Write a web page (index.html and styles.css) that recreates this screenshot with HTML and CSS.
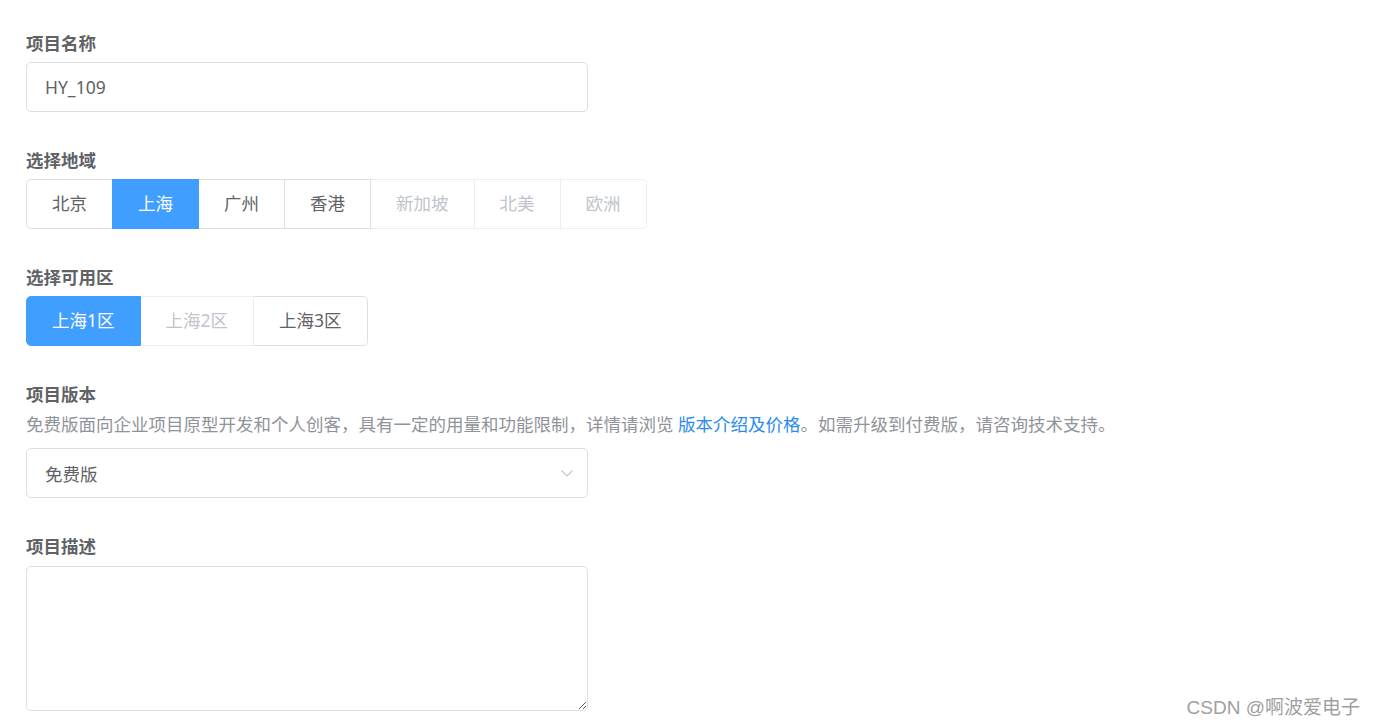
FILE: index.html
```html
<!DOCTYPE html>
<html lang="zh-CN">
<head>
  <meta charset="UTF-8" />
  <title>新建项目</title>
  <link rel="stylesheet" href="styles.css">
</head>
<body>
  <form class="project-form">
    <div class="form-item">
      <label class="form-label">项目名称</label>
      <input type="text" class="text-input" value="HY_109" />
    </div>

    <div class="form-item">
      <label class="form-label">选择地域</label>
      <div class="radio-group">
        <button type="button" class="radio-btn">北京</button>
        <button type="button" class="radio-btn is-active">上海</button>
        <button type="button" class="radio-btn">广州</button>
        <button type="button" class="radio-btn">香港</button>
        <button type="button" class="radio-btn is-disabled">新加坡</button>
        <button type="button" class="radio-btn is-disabled">北美</button>
        <button type="button" class="radio-btn is-disabled">欧洲</button>
      </div>
    </div>

    <div class="form-item">
      <label class="form-label">选择可用区</label>
      <div class="radio-group">
        <button type="button" class="radio-btn is-active">上海1区</button>
        <button type="button" class="radio-btn is-disabled">上海2区</button>
        <button type="button" class="radio-btn">上海3区</button>
      </div>
    </div>

    <div class="form-item">
      <label class="form-label">项目版本</label>
      <p class="form-tip">免费版面向企业项目原型开发和个人创客，具有一定的用量和功能限制，详情请浏览 <a href="#">版本介绍及价格</a>。如需升级到付费版，请咨询技术支持。</p>
      <div class="select-box">
        <span>免费版</span>
        <svg class="select-arrow" width="14" height="14" viewBox="0 0 14 14">
          <path d="M1.5 4.5 L7 10 L12.5 4.5" fill="none" stroke="#c0c4cc" stroke-width="1.1" />
        </svg>
      </div>
    </div>

    <div class="form-item">
      <label class="form-label">项目描述</label>
      <textarea class="text-area"></textarea>
    </div>
  </form>

  <div class="watermark">CSDN @啊波爱电子</div>
</body>
</html>
```

FILE: styles.css
```css
body {
  margin: 0;
  padding: 31px 0 0 26px;
  background-color: #fff;
  font-family: "Noto Sans", "Noto Sans CJK SC", sans-serif;
  color: #606266;
}
.project-form {
  width: 562px;
}
.form-item {
  margin-bottom: 36px;
}
.form-label {
  display: block;
  font-size: 17.5px;
  line-height: 24px;
  font-weight: bold;
  color: #606266;
  margin-bottom: 7px;
}
.text-input {
  box-sizing: border-box;
  display: block;
  width: 562px;
  height: 50px;
  padding: 0 18px;
  border: 1px solid #dcdfe6;
  border-radius: 5px;
  font-family: "Noto Sans", "Noto Sans CJK SC", sans-serif;
  font-size: 17.5px;
  color: #606266;
  outline: none;
}
.radio-group {
  display: flex;
  white-space: nowrap;
}
.radio-btn {
  box-sizing: border-box;
  height: 50px;
  padding: 0 25px;
  margin: 0;
  background: #fff;
  border: 1px solid #dcdfe6;
  border-left: 0;
  font-family: "Noto Sans", "Noto Sans CJK SC", sans-serif;
  font-size: 17.5px;
  line-height: 1;
  color: #606266;
  cursor: pointer;
}
.radio-btn:first-child {
  border-left: 1px solid #dcdfe6;
  border-radius: 5px 0 0 5px;
}
.radio-btn:last-child {
  border-radius: 0 5px 5px 0;
}
.radio-btn.is-active {
  background-color: #409eff;
  border-color: #409eff;
  color: #fff;
  box-shadow: -1px 0 0 0 #409eff;
}
.radio-btn.is-active:first-child {
  box-shadow: none;
}
.radio-btn.is-disabled {
  color: #c0c4cc;
  border-color: #ebeef5;
  cursor: not-allowed;
}
.form-tip {
  margin: -1px 0 12px;
  font-size: 17.5px;
  line-height: 24px;
  color: #909399;
  white-space: nowrap;
}
.form-tip a {
  color: #2a8cf0;
  text-decoration: none;
}
.select-box {
  box-sizing: border-box;
  display: flex;
  align-items: center;
  justify-content: space-between;
  width: 562px;
  height: 50px;
  padding: 0 13px 0 18px;
  border: 1px solid #dcdfe6;
  border-radius: 5px;
  font-size: 17.5px;
  color: #606266;
}
.text-area {
  box-sizing: border-box;
  display: block;
  width: 562px;
  height: 145px;
  margin-top: 8px;
  padding: 6px 18px;
  border: 1px solid #dcdfe6;
  border-radius: 5px;
  font-family: "Noto Sans", "Noto Sans CJK SC", sans-serif;
  font-size: 17.5px;
  outline: none;
}
.watermark {
  position: absolute;
  right: 14px;
  top: 695px;
  font-family: "Liberation Sans", "Noto Sans CJK SC", sans-serif;
  font-size: 19px;
  line-height: 26px;
  color: #a0a0a0;
}
```
